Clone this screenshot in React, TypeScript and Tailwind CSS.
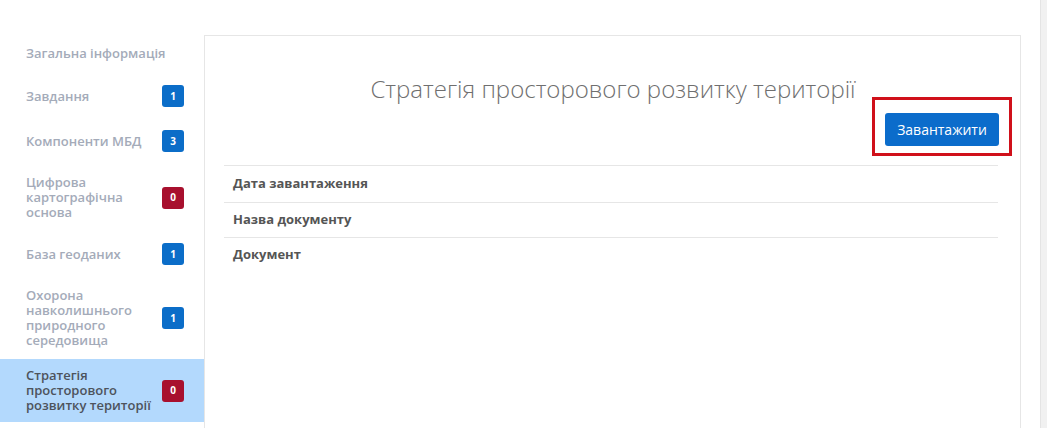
const menu = [
  { label: 'Загальна інформація' },
  { label: 'Завдання', count: 1, tone: 'blue' },
  { label: 'Компоненти МБД', count: 3, tone: 'blue' },
  { label: 'Цифрова картографічна основа', count: 0, tone: 'red' },
  { label: 'База геоданих', count: 1, tone: 'blue' },
  { label: 'Охорона навколишнього природного середовища', count: 1, tone: 'blue' },
  { label: 'Стратегія просторового розвитку території', count: 0, tone: 'red', active: true },
];

const rows = ['Дата завантаження', 'Назва документу', 'Документ'];

const App = () => {
  return (
    <div
      className="flex h-[428px] w-[1047px] overflow-hidden bg-white"
      style={{ fontFamily: '"Open Sans", "Noto Sans", sans-serif' }}>
      {/* sidebar */}
      <aside className="flex w-[204px] shrink-0 flex-col gap-[3px] pt-[34px]">
        {menu.map((item) => (
          <div
            key={item.label}
            className={`box-content flex min-h-[18px] items-center gap-[6px] pl-[26px] pr-[20px] ${
              item.active
                ? '-mt-[2px] bg-[#b3d9fd] py-[9px] text-[#4d535c]'
                : 'py-[10px] text-[#a4abb9]'
            }`}>
            <span className="flex-1 text-[13px] font-semibold leading-[15px]">
              {item.label}
            </span>
            {item.count !== undefined && (
              <span
                className={`flex h-[22px] w-[22px] shrink-0 items-center justify-center rounded-[3px] text-[10px] font-bold text-white ${
                  item.tone === 'red' ? 'bg-[#a8102e]' : 'bg-[#0b6dc8]'
                }`}>
                {item.count}
              </span>
            )}
          </div>
        ))}
      </aside>

      {/* content panel */}
      <main className="mt-[35px] h-[420px] w-[817px] shrink-0 border border-[#e6e6e6] pl-[19px] pr-[21px] pt-[39px]">
        <h1 className="pl-[3px] text-center text-[24px] font-light leading-[28px] text-[#6f6f6f]">
          Стратегія просторового розвитку території
        </h1>
        <div className="mt-[10px] flex justify-end">
          <div className="relative">
            <button className="h-[33px] w-[114px] rounded-[3px] bg-[#0b6ccb] text-[14px] text-white">
              Завантажити
            </button>
            <div className="pointer-events-none absolute -bottom-[10px] -left-[13px] -right-[13px] -top-[16px] border-[3px] border-[#d0101a]" />
          </div>
        </div>
        <div className="mr-[1px] mt-[19px]">
          {rows.map((r, i) => (
            <div
              key={r}
              className={`flex items-center border-t border-[#e6e6e6] pl-[9px] text-[13px] font-bold text-[#555] ${
                i === 0 ? 'h-[37px]' : 'h-[35px]'
              }`}>
              {r}
            </div>
          ))}
        </div>
      </main>

      <div className="ml-auto h-full w-[7px] border-l border-[#e4e4e4] bg-[#f1f1f1]" />
    </div>
  );
};

export default App;
